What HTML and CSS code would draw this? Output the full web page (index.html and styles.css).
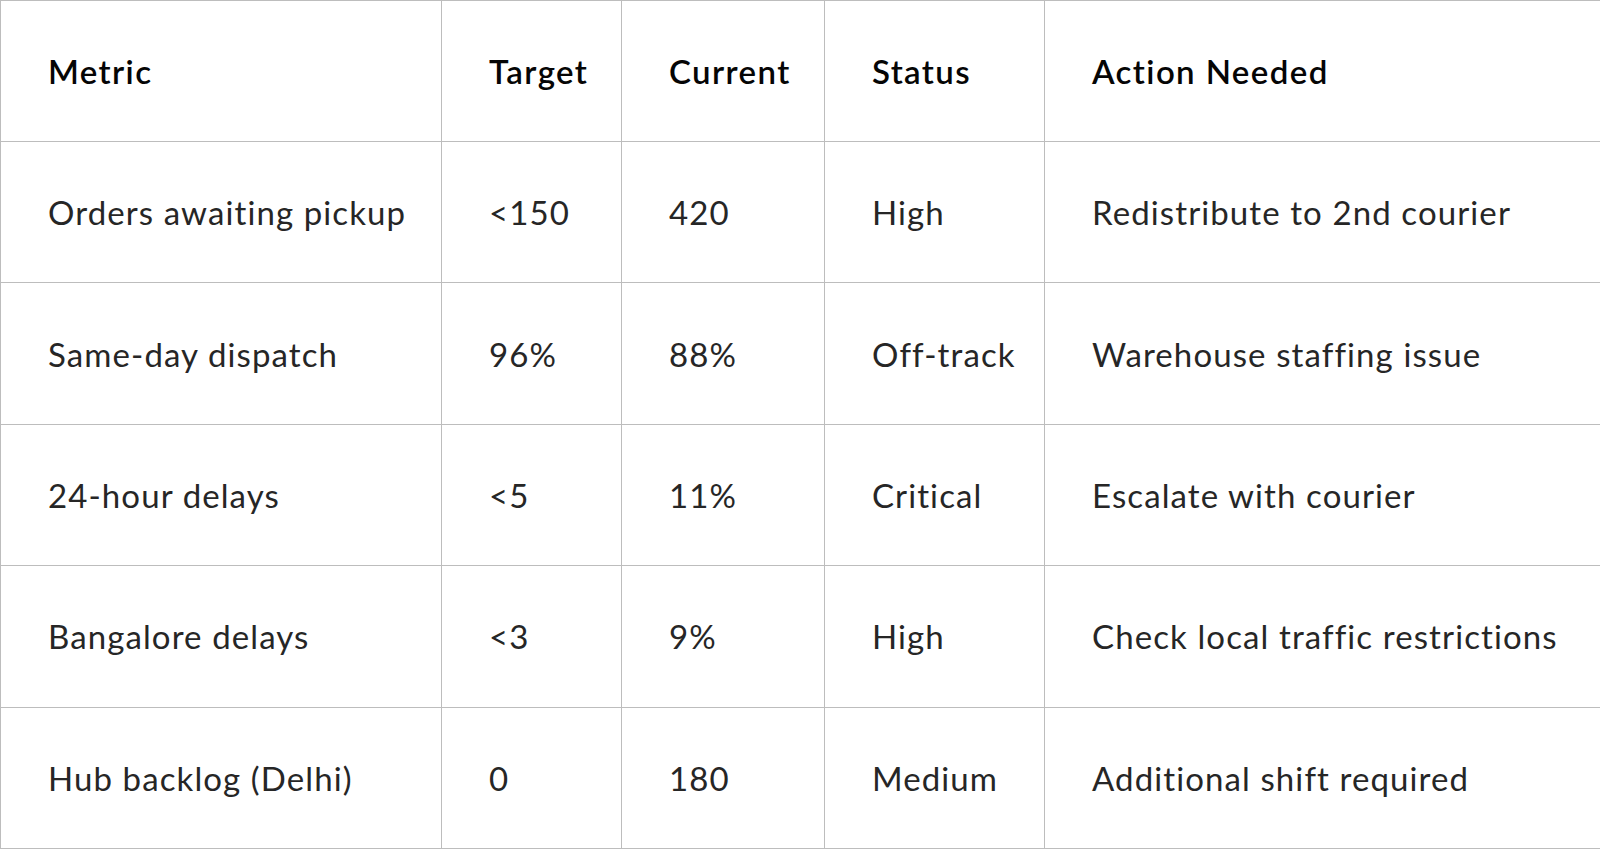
FILE: index.html
```html
<!DOCTYPE html>
<html lang="en">
<head>
<meta charset="utf-8">
<title>Metrics</title>
<link rel="stylesheet" href="styles.css">
</head>
<body>
<table class="metrics">
  <colgroup>
    <col class="c-metric">
    <col class="c-target">
    <col class="c-current">
    <col class="c-status">
    <col class="c-action">
  </colgroup>
  <thead>
    <tr>
      <th>Metric</th>
      <th>Target</th>
      <th>Current</th>
      <th>Status</th>
      <th>Action Needed</th>
    </tr>
  </thead>
  <tbody>
    <tr>
      <td>Orders awaiting pickup</td>
      <td>&lt;150</td>
      <td>420</td>
      <td>High</td>
      <td>Redistribute to 2nd courier</td>
    </tr>
    <tr>
      <td>Same-day dispatch</td>
      <td>96%</td>
      <td>88%</td>
      <td>Off-track</td>
      <td>Warehouse staffing issue</td>
    </tr>
    <tr>
      <td>24-hour delays</td>
      <td>&lt;5</td>
      <td>11%</td>
      <td>Critical</td>
      <td>Escalate with courier</td>
    </tr>
    <tr>
      <td>Bangalore delays</td>
      <td>&lt;3</td>
      <td>9%</td>
      <td>High</td>
      <td>Check local traffic restrictions</td>
    </tr>
    <tr>
      <td>Hub backlog (Delhi)</td>
      <td>0</td>
      <td>180</td>
      <td>Medium</td>
      <td>Additional shift required</td>
    </tr>
  </tbody>
</table>
</body>
</html>
```
FILE: styles.css
```css
html, body {
  margin: 0;
  padding: 0;
  background: #ffffff;
}

.metrics {
  width: 1600px;
  height: 849px;
  border-collapse: collapse;
  table-layout: fixed;
  font-family: "Lato", "Liberation Sans", sans-serif;
}

.c-metric { width: 441px; }
.c-target { width: 180px; }
.c-current { width: 203px; }
.c-status { width: 220px; }
.c-action { width: 556px; }

.metrics th,
.metrics td {
  border: 1px solid #bdbdbd;
  padding: 0 0 0 47px;
  text-align: left;
  vertical-align: middle;
  height: 140px;
  font-size: 33px;
  letter-spacing: 1.1px;
  white-space: nowrap;
}

.metrics th {
  font-weight: 600;
  letter-spacing: 1.4px;
  color: #050505;
}

.metrics td {
  font-weight: 400;
  color: #262626;
}
```
